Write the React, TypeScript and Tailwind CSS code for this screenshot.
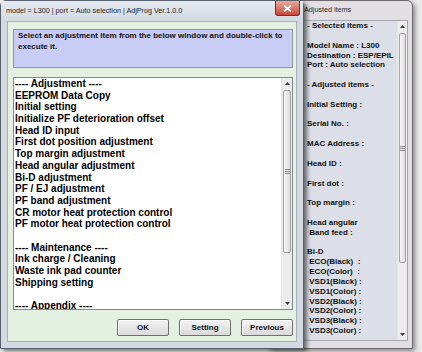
const adjustItems = [
  "---- Adjustment ----",
  "EEPROM Data Copy",
  "Initial setting",
  "Initialize PF deterioration offset",
  "Head ID input",
  "First dot position adjustment",
  "Top margin adjustment",
  "Head angular adjustment",
  "Bi-D adjustment",
  "PF / EJ adjustment",
  "PF band adjustment",
  "CR motor heat protection control",
  "PF motor heat protection control",
  "",
  "---- Maintenance ----",
  "Ink charge / Cleaning",
  "Waste ink pad counter",
  "Shipping setting",
  "",
  "---- Appendix ----",
];

const resultLines = [
  "- Selected items -",
  "",
  "Model Name : L300",
  "Destination : ESP/EPIL",
  "Port : Auto selection",
  "",
  "- Adjusted items -",
  "",
  "Initial Setting :",
  "",
  "Serial No. :",
  "",
  "MAC Address :",
  "",
  "Head ID :",
  "",
  "First dot :",
  "",
  "Top margin :",
  "",
  "Head angular",
  " Band feed :",
  "",
  "Bi-D",
  " ECO(Black)  :",
  " ECO(Color)  :",
  " VSD1(Black) :",
  " VSD1(Color) :",
  " VSD2(Black) :",
  " VSD2(Color) :",
  " VSD3(Black) :",
  " VSD3(Color) :",
];

function Arrow({ up }: { up?: boolean }) {
  return (
    <svg width="5" height="3" viewBox="0 0 5 3">
      <path d={up ? "M0 3 L2.5 0 L5 3Z" : "M0 0 L2.5 3 L5 0Z"} fill="#3a3a3a" />
    </svg>
  );
}

function ScrollBar({ widthClass, thumbClass }: { widthClass: string; thumbClass: string }) {
  return (
    <div className={`flex shrink-0 flex-col border-l border-[#e4e4e4] bg-[#ececec] ${widthClass}`}>
      <div className="flex h-[11px] items-center justify-center">
        <Arrow up />
      </div>
      <div
        className={`mx-[1px] mt-[1px] flex items-center justify-center rounded-[2px] border border-[#a3a3a3] bg-gradient-to-r from-[#f6f6f6] to-[#dcdcdc] ${thumbClass}`}
      >
        <svg width="5" height="5" viewBox="0 0 5 5">
          <path d="M0 0.5H5M0 2.5H5M0 4.5H5" stroke="#8a8a8a" strokeWidth="1" />
        </svg>
      </div>
      <div className="flex-1" />
      <div className="flex h-[11px] items-center justify-center">
        <Arrow />
      </div>
    </div>
  );
}

function AdjustedWindow() {
  return (
    <div className="absolute left-[268px] top-0 flex h-[349px] w-[145px] flex-col rounded-t-[6px] border border-[#6e6a70] bg-[#e3dee2] shadow-[2px_2px_5px_rgba(0,0,0,0.45)]">
      <div className="flex h-[19px] items-center pl-[35px] text-[7.2px] text-[#2a2a2a]">Adjusted items</div>
      <div className="flex flex-1 pb-[7px] pl-[23px] pr-[4px]">
        <div className="flex flex-1 border border-[#a4a8b0] bg-[#dcdfe7]">
          <div className="flex-1 overflow-hidden whitespace-pre pl-[14px] text-[8px] font-bold leading-[9.85px] text-[#111]">
            {resultLines.map((line, i) => (
              <div key={i} className="h-[9.85px]">
                {line}
              </div>
            ))}
          </div>
          <ScrollBar widthClass="w-[10px]" thumbClass="h-[230px]" />
        </div>
      </div>
    </div>
  );
}

function MainWindow() {
  return (
    <div className="absolute left-0 top-0 z-10 flex h-[349px] w-[304px] flex-col rounded-t-[6px] border border-[#58616b] bg-[#d2d9e1] shadow-[3px_2px_4px_rgba(0,0,0,0.55)]">
      <div className="relative flex h-[20px] items-center bg-gradient-to-b from-[#e4e9ee] to-[#d2d9e1] pl-[5px] text-[7.2px] text-[#1f1f1f]">
        model = L300 | port = Auto selection | AdjProg Ver.1.0.0
        <div className="absolute right-[3px] top-0 flex h-[15px] w-[25px] items-center justify-center rounded-b-[3px] border border-t-0 border-[#7c2f27] bg-gradient-to-b from-[#e9a899] to-[#c7463a]">
          <svg width="9" height="7" viewBox="0 0 9 7">
            <path d="M1 0.5L8 6.5M8 0.5L1 6.5" stroke="#ffffff" strokeWidth="1.8" />
          </svg>
        </div>
      </div>
      <div className="flex flex-1 px-[6px] pb-[6px]">
        <div className="flex flex-1 flex-col border border-[#a6afb9] bg-[#e4f0e1] pb-[5px] pl-[5px] pr-[3px] pt-[7px]">
          <div className="h-[39px] whitespace-nowrap border border-[#8e98a4] bg-[#c9cdf5] px-[4px] pt-[1px] text-[8px] font-bold leading-[10.7px] text-[#111]">
            Select an adjustment item from the below window and double-click to
            <br />
            execute it.
          </div>
          <div className="mt-[9px] flex h-[233px] border border-[#828790] bg-white">
            <div className="flex-1 overflow-hidden whitespace-nowrap pl-[1px] text-[10px] font-bold leading-[11.7px] text-black">
              {adjustItems.map((item, i) => (
                <div key={i} className="h-[11.7px]">
                  {item}
                </div>
              ))}
            </div>
            <ScrollBar widthClass="w-[11px]" thumbClass="h-[163px]" />
          </div>
          <div className="mt-[9px] flex h-[17px] justify-end gap-[10px]">
            {["OK", "Setting", "Previous"].map((label) => (
              <button
                key={label}
                className="h-[17px] w-[52px] rounded-[2px] border border-[#707070] bg-gradient-to-b from-[#f3f3f3] to-[#dadada] text-[8px] font-bold text-[#111] shadow-[inset_1px_1px_0_#ffffff]"
              >
                {label}
              </button>
            ))}
          </div>
        </div>
      </div>
    </div>
  );
}

export default function App() {
  return (
    <div className="relative h-[352px] w-[422px] overflow-hidden bg-[#ebebeb] font-['Liberation_Sans',Arial,sans-serif]">
      <AdjustedWindow />
      <MainWindow />
    </div>
  );
}
